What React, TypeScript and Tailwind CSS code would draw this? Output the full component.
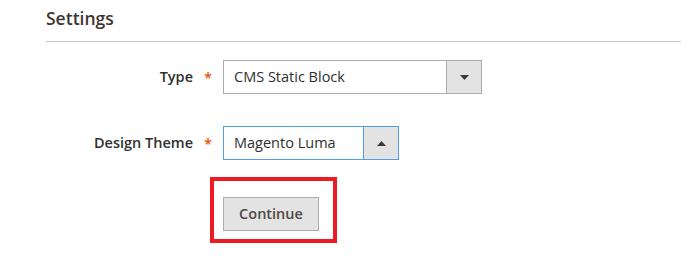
function Arrow({ up }: { up?: boolean }) {
  return (
    <svg width="9" height="5" viewBox="0 0 9 5" className="text-[#41362f]">
      {up ? <path d="M0 5L4.5 0L9 5Z" fill="currentColor" /> : <path d="M0 0L4.5 5L9 0Z" fill="currentColor" />}
    </svg>
  );
}

function Field({
  label,
  value,
  width,
  focused,
}: {
  label: string;
  value: string;
  width: string;
  focused?: boolean;
}) {
  return (
    <div className="flex items-center">
      <div className="w-[193px] text-right text-[14.5px] font-semibold text-[#303030]">{label}</div>
      <div className="w-[30px] text-center text-[14px] font-semibold text-[#eb5202]">*</div>
      <div
        className={`${width} flex h-[34px] border ${focused ? 'border-[#4f9fe6]' : 'border-[#adadad]'}`}
      >
        <div className="flex flex-1 items-center pl-[10px] text-[14.5px] text-[#303030]">{value}</div>
        <div
          className={`flex w-[35px] items-center justify-center border-l bg-[#e3e3e3] ${
            focused ? 'border-[#4f9fe6]' : 'border-[#adadad]'
          }`}
        >
          <Arrow up={focused} />
        </div>
      </div>
    </div>
  );
}

export default function App() {
  return (
    <div className="h-[259px] w-[689px] overflow-hidden bg-white font-['Open_Sans',sans-serif]">
      <div className="pl-[46px] pr-[8px]">
        <div className="h-[42px] border-b border-[#cdc6c0] pt-[5px] text-[17.5px] font-semibold text-[#41362f]">
          Settings
        </div>
      </div>
      <div className="mt-[18px]">
        <Field label="Type" value="CMS Static Block" width="w-[259px]" />
      </div>
      <div className="mt-[32px]">
        <Field label="Design Theme" value="Magento Luma" width="w-[176px]" focused />
      </div>
      <div className="ml-[210px] mt-[17px] h-[66px] w-[127px] border-[4px] border-[#ed1c24] pl-[9px] pt-[16px]">
        <button className="h-[34px] w-[96px] border border-[#adadad] bg-[#e3e3e3] text-[14.5px] font-semibold text-[#514943]">
          Continue
        </button>
      </div>
    </div>
  );
}
